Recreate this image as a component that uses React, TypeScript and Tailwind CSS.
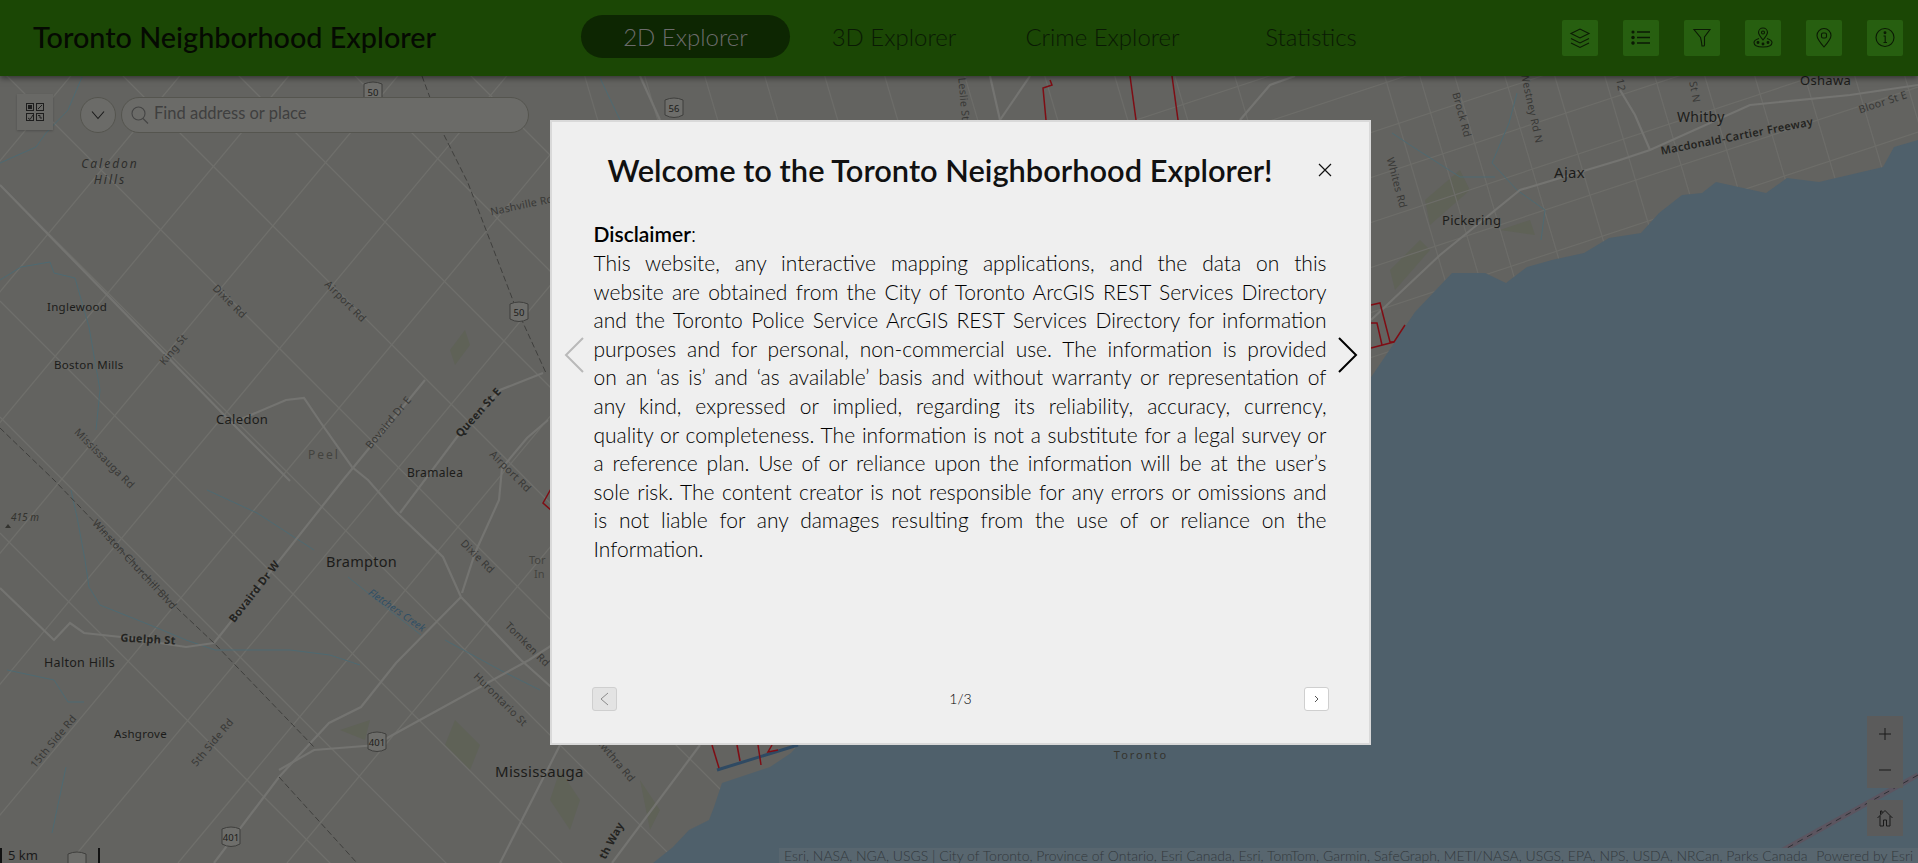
import React from 'react';

// Basemap data, all in page pixels
const westNwSe = [533, 417, 301, 185, 69, -47, -163, -279, -395, -511, -627];
const westSwNe = [-84, 25, 134, 243, 352, 461, 570, 679, 788, 897, 1006];
const eastEne = [120, 165, 210, 255, 300, 345, 390, 435, 480, 525, 570, 615, 660];
const eastSteep = [580, 640, 700, 760, 820, 880, 960, 1040, 1110, 1170, 1230, 1380, 1415, 1450, 1500, 1550, 1600, 1650, 1700, 1750, 1800, 1850, 1900];

const highways = [
  '0,185 229,420 290,481',
  '232,423 286,400 304,398 321,423 352,467 368,480 396,512 443,557 461,597',
  '214,863 279,777 329,723 361,707 396,663 461,597',
  '461,597 521,660 560,695',
  '462,593 475,553 499,500 502,468 527,438 548,420',
  '214,643 343,480 425,380',
  '400,513 457,437 500,390 543,373',
  '279,770 314,750 377,745 389,737 529,660 560,640',
  '0,588 54,640 70,623 84,633 121,637 186,647 214,643',
  '1371,320 1440,255 1520,190 1620,160 1650,150 1750,105 1850,95 1918,85',
  '1620,90 1635,115 1650,150',
  '612,863 700,745',
  '500,863 560,745',
  '1000,120 1030,76',
  '640,76 660,120',
  '1240,120 1270,85 1295,76',
  '990,76 1000,120',
];

const streams = [
  '0,163 36,147 46,133 68,110 82,77',
  '0,280 21,267 50,262 54,273 75,278 89,327 100,390 96,430',
  '71,490 77,517 85,560 89,587 100,605 150,625 186,640 215,650 250,650 290,650 330,655 360,665',
  '207,490 257,513 314,550',
  '348,577 393,613 421,635',
  '7,670 54,680 68,702 84,702',
  '66,767 52,833',
  '1392,133 1413,147 1460,177 1495,177',
  '1517,93 1509,123 1492,163 1517,190 1545,210 1541,240',
  '600,78 620,120',
  '445,640 500,670 540,690',
];

const greens = [
  '1425,200 1460,170 1470,190 1430,225',
  '1390,270 1420,240 1430,250 1395,290',
  '340,730 370,720 365,740',
  '455,720 480,745 470,770 445,745',
  '560,770 580,800 570,830 550,800',
  '640,780 660,810 650,830',
  '450,350 465,330 470,345 455,365',
  '1500,230 1530,220 1535,235',
];

const labels: [string, number, number, number, number, string, string?][] = [
  // text, x, y, rotate, size, fill, style
  ['Inglewood', 47, 311, 0, 11.5, '#1c1c1a'],
  ['Boston Mills', 54, 369, 0, 11.5, '#1c1c1a'],
  ['Caledon', 216, 424, 0, 13, '#1c1c1a'],
  ['Bramalea', 407, 477, 0, 12, '#1c1c1a'],
  ['Brampton', 326, 567, 0, 14.5, '#1c1c1a'],
  ['Halton Hills', 44, 667, 0, 12.5, '#1c1c1a'],
  ['Ashgrove', 114, 738, 0, 11.5, '#1c1c1a'],
  ['Mississauga', 495, 777, 0, 15, '#1c1c1a'],
  ['Oshawa', 1800, 85, 0, 13, '#1c1c1a'],
  ['Whitby', 1677, 122, 0, 14, '#1c1c1a'],
  ['Ajax', 1554, 178, 0, 15, '#1c1c1a'],
  ['Pickering', 1442, 225, 0, 13, '#1c1c1a'],
];

const roadLabels: [string, number, number, number, number, number?][] = [
  // text, center x, center y, rotate, size, weight
  ['Dixie Rd', 229, 302, 45, 10.5],
  ['Airport Rd', 345, 302, 45, 10.5],
  ['King St', 174, 350, -50, 10.5],
  ['Bovaird Dr E', 389, 423, -50, 10.5],
  ['Queen St E', 479, 413, -48, 11, 700],
  ['Airport Rd', 510, 472, 45, 10.5],
  ['Dixie Rd', 477, 557, 45, 10.5],
  ['Mississauga Rd', 104, 459, 45, 10.5],
  ['Nashville Rd', 522, 206, -12, 10.5],
  ['Winston-Churchill Blvd', 134, 565, 47, 10.5],
  ['Bovaird Dr W', 255, 592, -52, 11, 700],
  ['Guelph St', 148, 640, 3, 11, 700],
  ['15th Side Rd', 54, 742, -50, 10.5],
  ['5th Side Rd', 213, 743, -50, 10.5],
  ['Tomken Rd', 527, 645, 45, 10.5],
  ['Hurontario St', 500, 700, 45, 10.5],
  ['Cawthra Rd', 613, 758, 50, 10.5],
  ['th Way', 612, 841, -62, 11, 700],
  ['Leslie St', 963, 99, 85, 10.5],
  ['Brock Rd', 1461, 115, 75, 10.5],
  ['Westney Rd N', 1531, 108, 78, 10.5],
  ['12', 1620, 85, 80, 10.5],
  ['St N', 1694, 92, 80, 10.5],
  ['Whites Rd', 1396, 183, 75, 10.5],
  ['Macdonald-Cartier Freeway', 1737, 137, -11, 11, 600],
  ['Bloor St E', 1883, 103, -18, 10.5],
];

const shields: [string, number, number][] = [
  ['50', 373, 92],
  ['50', 519, 312],
  ['56', 674, 108],
  ['401', 377, 742],
  ['401', 231, 837],
  ['', 77, 862],
];

const redLines = [
  '1046,120 1043,88 1052,85 1050,80',
  '1130,76 1136,120',
  '1172,76 1178,120',
  '1371,305 1380,303 1390,342 1394,342 1405,325',
  '1371,348 1394,342',
  '1371,323 1377,323 1382,345',
  '552,487 543,503 552,511',
  '712,745 719,768',
  '737,745 740,761',
  '758,745 761,765',
  '772,745 768,752 778,750',
];

const MapBackground: React.FC = () => (
  <svg className="absolute inset-0 w-full h-full" viewBox="0 0 1918 863">
    <defs>
      <clipPath id="west">
        <path d="M0 0H560V600H1000V863H0Z" />
      </clipPath>
      <clipPath id="east">
        <path d="M560 0H1918V600H560Z" />
      </clipPath>
    </defs>
    <rect width="1918" height="863" fill="#636360" />
    {greens.map((p, i) => (
      <polygon key={i} points={p} fill="#5f6257" />
    ))}
    <g clipPath="url(#west)" stroke="#6f6f6b" strokeWidth="1.3">
      {westNwSe.map((c) => (
        <line key={c} x1="0" y1={c} x2="1000" y2={c + 1000} />
      ))}
      {westSwNe.map((d) => (
        <line key={d} x1={d} y1="0" x2={d - 719} y2="863" />
      ))}
    </g>
    <g clipPath="url(#east)" stroke="#6d6d69" strokeWidth="1.2">
      {eastEne.map((a) => (
        <line key={a} x1="560" y1={a + 190} x2="1918" y2={a + 190 - 448} />
      ))}
      {eastSteep.map((b) => (
        <line key={b} x1={b} y1="60" x2={b + 130} y2="500" />
      ))}
    </g>
    <g fill="none" stroke="#4e6a72" strokeWidth="1">
      {streams.map((p, i) => (
        <polyline key={i} points={p} />
      ))}
    </g>
    <g fill="none" stroke="#747471" strokeWidth="2.2">
      {highways.map((p, i) => (
        <polyline key={i} points={p} />
      ))}
    </g>
    <g fill="none" stroke="#3f3f3d" strokeWidth="1" strokeDasharray="6 3">
      <polyline points="422,76 443,133 468,183 514,303 546,373" />
      <polyline points="0,428 54,480 179,610 214,643 314,747" />
      <polyline points="279,777 357,863" />
    </g>
    <polygon
      points="1918,140 1894,147 1883,167 1819,182 1787,178 1766,193 1716,182 1702,193 1682,195 1659,213 1641,233 1609,238 1584,253 1552,260 1527,267 1506,283 1485,273 1452,273 1415,312 1376,370 1300,480 1000,700 798,745 791,753 770,767 740,777 722,783 714,807 709,820 689,830 673,847 653,863 1918,863"
      fill="#4f606b"
    />
    <polyline points="1918,775 1760,863" fill="none" stroke="#5c5560" strokeWidth="5" />
    <polyline points="1918,775 1760,863" fill="none" stroke="#2f2f33" strokeWidth="1" strokeDasharray="6 5" />
    <line x1="717" y1="770" x2="798" y2="745" stroke="#2f4a63" strokeWidth="3" />
    <g fill="none" stroke="#7f0d14" strokeWidth="1.5">
      {redLines.map((p, i) => (
        <polyline key={i} points={p} />
      ))}
    </g>
    <g className="font-['Noto_Sans',sans-serif]">
      {labels.map(([text, x, y, , size, fill]) => (
        <text key={text} x={x} y={y} fontSize={size} fill={fill} letterSpacing="0.3">
          {text}
        </text>
      ))}
      {roadLabels.map(([text, x, y, rot, size, weight], i) => (
        <text
          key={i}
          x={x}
          y={y}
          fontSize={size}
          fontWeight={weight ?? 400}
          fill={weight ? '#232321' : '#383836'}
          textAnchor="middle"
          dominantBaseline="middle"
          letterSpacing="0.3"
          transform={`rotate(${rot} ${x} ${y})`}
        >
          {text}
        </text>
      ))}
      <text x="110" y="168" fontSize="12" fontStyle="italic" fill="#2e2e2c" textAnchor="middle" letterSpacing="2">
        Caledon
      </text>
      <text x="110" y="184" fontSize="12" fontStyle="italic" fill="#2e2e2c" textAnchor="middle" letterSpacing="2">
        Hills
      </text>
      <text x="308" y="459" fontSize="12" fill="#43433f" letterSpacing="2">
        Peel
      </text>
      <text x="11" y="521" fontSize="10" fontStyle="italic" fill="#33332f">
        415 m
      </text>
      <polygon points="5,528 11,528 8,524" fill="#33332f" />
      <text x="395" y="613" fontSize="10" fontStyle="italic" fill="#2f4f66" textAnchor="middle" transform="rotate(35 395 613)">
        Fletchers Creek
      </text>
      <text x="529" y="564" fontSize="11" fill="#43433f">
        Tor
      </text>
      <text x="534" y="578" fontSize="11" fill="#43433f">
        In
      </text>
      <text x="1141" y="759" fontSize="11" fill="#35342e" textAnchor="middle" letterSpacing="2">
        Toronto
      </text>
      {shields.map(([text, x, y], i) => (
        <g key={i}>
          <path
            d={`M${x - 9} ${y - 8}Q${x} ${y - 12} ${x + 9} ${y - 8}V${y + 7}Q${x} ${y + 12} ${x - 9} ${y + 7}Z`}
            fill="#6e6e6b"
            stroke="#3f3f3d"
          />
          <text x={x} y={y + 3.5} fontSize="9.5" fill="#1c1c1a" textAnchor="middle">
            {text}
          </text>
        </g>
      ))}
    </g>
  </svg>
);

// Header tool icons, drawn on the 36x36 button
const ICON_PATHS: React.ReactNode[] = [
  <path key="layers" d="M9 13.5L18 9L27 13.5L18 18ZM9 18.5L18 23L27 18.5M9 23L18 27.5L27 23" />,
  <g key="list">
    <path d="M14 12H27M14 17.5H27M14 23H27" strokeWidth="1.5" />
    <circle cx="10" cy="12" r="1" fill="#0b1a04" />
    <circle cx="10" cy="17.5" r="1.2" fill="#0b1a04" />
    <circle cx="10" cy="23" r="1.2" fill="#0b1a04" />
  </g>,
  <path key="filter" d="M10 9.5H26L20.5 17V25Q20.5 26 19.5 26H18Q17.5 21 16.5 17.5Z" />,
  <g key="cluster">
    <path d="M18 20Q13.5 14.5 13.5 12.5A4.5 4.5 0 0 1 22.5 12.5Q22.5 14.5 18 20Z" />
    <circle cx="18" cy="12.5" r="1.5" />
    <path d="M14 18.5Q9 20 9 22.5Q9 27 18 27Q27 27 27 22.5Q27 20 22 18.5" />
    <circle cx="13" cy="22.5" r="0.9" fill="#0b1a04" />
    <circle cx="18" cy="24" r="0.9" fill="#0b1a04" />
    <circle cx="23" cy="22.5" r="0.9" fill="#0b1a04" />
  </g>,
  <g key="pin">
    <path d="M18 27Q11 19 11 15.5A7 7 0 0 1 25 15.5Q25 19 18 27Z" />
    <rect x="15.5" y="13" width="5" height="5" rx="1.5" />
  </g>,
  <g key="info">
    <circle cx="18" cy="17.5" r="9" />
    <path d="M16.5 16H18.2V22.5M16.5 22.5H20" />
    <circle cx="18" cy="12.8" r="0.9" fill="#0b1a04" />
  </g>,
];

const Header: React.FC = () => (
  <header className="relative z-10 flex items-center h-[76px] bg-[#1b4705] shadow-[0_2px_6px_rgba(0,0,0,0.5)] font-['Lato',sans-serif]">
    <div className="w-[581px] pl-[33px] text-[28.8px] font-medium text-[#050a02]">
      Toronto Neighborhood Explorer
    </div>
    <nav className="flex mb-[3px] text-[24px] font-light text-[#0a1a04]">
      <div className="flex items-center justify-center w-[209px] h-[43px] rounded-full bg-[#0d2602] text-[#6b6b6b]">2D Explorer</div>
      <div className="flex items-center justify-center w-[208px] h-[43px]">3D Explorer</div>
      <div className="flex items-center justify-center w-[209px] h-[43px]">Crime Explorer</div>
      <div className="flex items-center justify-center w-[208px] h-[43px]">Statistics</div>
    </nav>
    <div className="ml-auto flex gap-[25px] pr-[15px]">
      {ICON_PATHS.map((icon, i) => (
        <div key={i} className="w-[36px] h-[36px] rounded-[2px] bg-[#275f10]">
          <svg width="36" height="36" viewBox="0 0 36 36" fill="none" stroke="#0b1a04" strokeWidth="1.1">
            {icon}
          </svg>
        </div>
      ))}
    </div>
  </header>
);

const SearchBar: React.FC = () => (
  <div className="absolute top-[94px] left-[17px] flex items-start font-['Lato',sans-serif]">
    <div className="flex items-center justify-center w-[36px] h-[36px] bg-[#696966] shadow-[0_1px_2px_rgba(0,0,0,0.2)]">
      <svg width="20" height="20" viewBox="0 0 20 20" fill="none" stroke="#1e1e1e" strokeWidth="1">
        <rect x="1.5" y="1.5" width="7" height="7" />
        <rect x="11.5" y="1.5" width="7" height="7" />
        <rect x="1.5" y="11.5" width="7" height="7" />
        <rect x="11.5" y="11.5" width="7" height="7" />
        <rect x="3.5" y="3.5" width="3" height="3" fill="#1e1e1e" />
        <path d="M13 7L17 3M3 16L5 17.5L8 13M13 13.5H15V16H17" />
      </svg>
    </div>
    <div className="flex items-center justify-center w-[36px] h-[36px] ml-[27px] mt-[3px] rounded-full border border-[#55554f] bg-[#6b6b68]">
      <svg width="14" height="10" viewBox="0 0 14 10" fill="none" stroke="#1a1a1a" strokeWidth="1.1">
        <path d="M1 1.5L7 8.5L13 1.5" />
      </svg>
    </div>
    <div className="flex items-center w-[408px] h-[36px] ml-[5px] mt-[3px] pl-[9px] rounded-full border border-[#55554f] bg-[#6b6b68] text-[16.5px] text-[#3f3f3f]">
      <svg width="18" height="18" viewBox="0 0 18 18" fill="none" stroke="#444" strokeWidth="1.1">
        <circle cx="7.5" cy="7.5" r="6.5" />
        <path d="M12 12.5L17 17.5" />
      </svg>
      <span className="ml-[5px] pb-[3px]">Find address or place</span>
    </div>
  </div>
);

const ZoomControls: React.FC = () => (
  <div className="absolute right-[15px] top-[716px] flex flex-col gap-[12px] text-[#1a1a1a]">
    <div className="w-[36px] h-[72px] bg-[#5b5b5b] flex flex-col">
      <div className="flex-1 flex items-center justify-center">
        <svg width="12" height="12" viewBox="0 0 12 12" stroke="#1a1a1a" strokeWidth="1">
          <path d="M6 0V12M0 6H12" />
        </svg>
      </div>
      <div className="flex-1 flex items-center justify-center">
        <svg width="12" height="12" viewBox="0 0 12 12" stroke="#1a1a1a" strokeWidth="1">
          <path d="M0 6H12" />
        </svg>
      </div>
    </div>
    <div className="w-[36px] h-[36px] bg-[#5b5b5b] flex items-center justify-center">
      <svg width="18" height="18" viewBox="0 0 18 18" fill="none" stroke="#1a1a1a" strokeWidth="1">
        <path d="M1.5 9L9 1.5L16.5 9M4 7V17H7.5V11H10.5V17H14V7M4.5 5.5V2H6V4" />
      </svg>
    </div>
  </div>
);

const Attribution: React.FC = () => (
  <>
    <div className="absolute left-0 bottom-0 flex items-end h-[15px] w-[100px] border-x-2 border-[#111] pl-[6px] text-[13px] leading-[15px] text-[#1a1a1a] font-['Noto_Sans',sans-serif]">
      5 km
    </div>
    <div className="absolute right-0 bottom-0 left-[779px] flex justify-between h-[15px] pl-[5px] pr-[5px] bg-[#58666f] text-[14px] leading-[15px] font-light text-[#33393d] font-['Lato',sans-serif] whitespace-nowrap overflow-hidden">
      <span>
        Esri, NASA, NGA, USGS | City of Toronto, Province of Ontario, Esri Canada, Esri, TomTom, Garmin, SafeGraph,
        METI/NASA, USGS, EPA, NPS, USDA, NRCan, Parks Canada
      </span>
      <span>Powered by Esri</span>
    </div>
  </>
);

// Line breaks kept as in the page, each line justified on its own
const DISCLAIMER_LINES = [
  'This website, any interactive mapping applications, and the data on this',
  'website are obtained from the City of Toronto ArcGIS REST Services Directory',
  'and the Toronto Police Service ArcGIS REST Services Directory for information',
  'purposes and for personal, non-commercial use. The information is provided',
  'on an ‘as is’ and ‘as available’ basis and without warranty or representation of',
  'any kind, expressed or implied, regarding its reliability, accuracy, currency,',
  'quality or completeness. The information is not a substitute for a legal survey or',
  'a reference plan. Use of or reliance upon the information will be at the user’s',
  'sole risk. The content creator is not responsible for any errors or omissions and',
  'is not liable for any damages resulting from the use of or reliance on the',
];

const WelcomeModal: React.FC = () => (
  <div className="absolute inset-0 z-20 flex items-center justify-center pt-[1px] pl-[2px] font-['Lato',sans-serif]">
    <div className="relative flex flex-col w-[821px] h-[625px] border-2 border-[#d9d9d9] bg-[#efefef] px-[42px] text-[#111]">
      <div className="flex items-center justify-center h-[96px] pt-[3px] pr-[40px] text-[30.8px] font-semibold">
        Welcome to the Toronto Neighborhood Explorer!
      </div>
      <svg className="absolute top-[41px] left-[766px]" width="14" height="14" viewBox="0 0 14 14" stroke="#111" strokeWidth="1.2">
        <path d="M1 1L13 13M13 1L1 13" />
      </svg>
      <div className="text-[21px] leading-[28.6px] font-light text-black">
        <div className="mt-[2px]">
          <span className="font-semibold">Disclaimer</span>:
        </div>
        <div className="mt-[1px]">
          {DISCLAIMER_LINES.map((line) => (
            <div key={line} className="text-justify [text-align-last:justify]">
              {line}
            </div>
          ))}
          <div>Information.</div>
        </div>
      </div>
      <div className="mt-auto mb-[32px] -ml-[2px] -mr-[3px] flex items-center justify-between">
        <div className="flex items-center justify-center w-[25px] h-[24px] rounded-[3px] border border-[#cfcfcf] bg-[#e3e3e3]">
          <svg width="9" height="14" viewBox="0 0 9 14" fill="none" stroke="#8a8a8a" strokeWidth="1">
            <path d="M8 1L1 7L8 13" />
          </svg>
        </div>
        <span className="text-[14px] font-light text-black">1/3</span>
        <div className="flex items-center justify-center w-[25px] h-[24px] rounded-[3px] border border-[#cfcfcf] bg-white">
          <svg width="5" height="8" viewBox="0 0 5 8" fill="none" stroke="#555" strokeWidth="1">
            <path d="M1 1L4 4L1 7" />
          </svg>
        </div>
      </div>
      <svg className="absolute top-[215px] left-[12px]" width="21" height="36" viewBox="0 0 21 36" fill="none" stroke="#b9b9b9" strokeWidth="2">
        <path d="M19 1L2 18L19 35" />
      </svg>
      <svg className="absolute top-[215px] left-[785px]" width="21" height="36" viewBox="0 0 21 36" fill="none" stroke="#000" strokeWidth="2">
        <path d="M2 1L19 18L2 35" />
      </svg>
    </div>
  </div>
);

export default function App() {
  return (
    <div className="relative w-[1918px] h-[863px] overflow-hidden bg-[#636360]">
      <MapBackground />
      <Header />
      <SearchBar />
      <ZoomControls />
      <Attribution />
      <WelcomeModal />
    </div>
  );
}
